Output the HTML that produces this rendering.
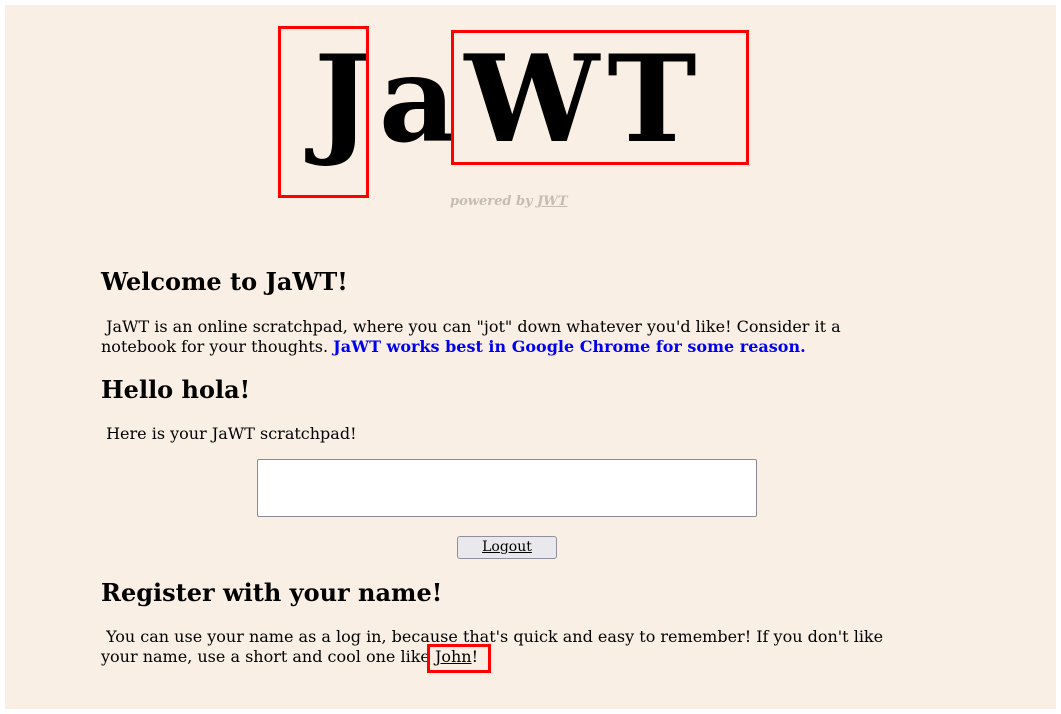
<!DOCTYPE html>
<html><head><meta charset="utf-8"><style>
body{margin:0;background:#fff;font-family:"DejaVu Serif","Liberation Serif",serif;}
#bg{position:absolute;left:5px;top:5px;width:1051px;height:704px;background:#f9efe5;}
.a{position:absolute;white-space:nowrap;}
h2{margin:0;font-size:24px;font-weight:bold;}
p{margin:0;font-size:16px;line-height:20px;}
.box{position:absolute;border:3px solid #f00;box-sizing:border-box;}
</style></head><body>
<div id="bg"></div>
<div class="a" style="left:314px;top:40px;font-size:120px;font-weight:bold;line-height:120px;letter-spacing:8px">JaWT</div>
<div class="box" style="left:278px;top:26px;width:91px;height:172px"></div>
<div class="box" style="left:451px;top:30px;width:298px;height:135px"></div>
<div class="a" style="left:450px;top:194px;font-size:13px;font-weight:bold;font-style:italic;color:#c8bcb0">powered by <u>JWT</u></div>
<h2 class="a" style="left:101px;top:267px">Welcome to JaWT!</h2>
<p class="a" style="left:101px;top:317px">&nbsp;JaWT is an online scratchpad, where you can "jot" down whatever you'd like! Consider it a<br>notebook for your thoughts. <b style="color:#0000ee">JaWT works best in Google Chrome for some reason.</b></p>
<h2 class="a" style="left:101px;top:375px">Hello hola!</h2>
<p class="a" style="left:101px;top:424px">&nbsp;Here is your JaWT scratchpad!</p>
<div class="a" style="left:257px;top:459px;width:500px;height:58px;background:#fff;border:1px solid #8a8a96;box-sizing:border-box;border-radius:2px"></div>
<div class="a" style="left:457px;top:536px;width:100px;height:23px;background:#e9e9ed;border:1px solid #8f8f9d;border-radius:3px;box-sizing:border-box;text-align:center;font-size:14px;line-height:21px"><u>Logout</u></div>
<h2 class="a" style="left:101px;top:578px">Register with your name!</h2>
<p class="a" style="left:101px;top:627px">&nbsp;You can use your name as a log in, because that's quick and easy to remember! If you don't like<br>your name, use a short and cool one like <u>John</u>!</p>
<div class="box" style="left:427px;top:644px;width:64px;height:29px"></div>
</body></html>
